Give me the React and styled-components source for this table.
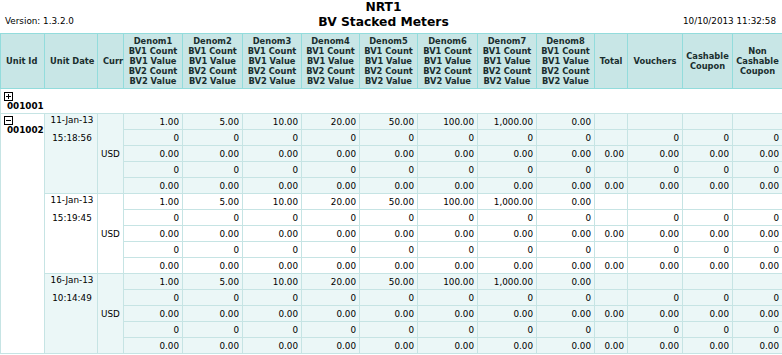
import React from 'react';
import styled, { createGlobalStyle } from 'styled-components';

const GlobalStyle = createGlobalStyle`
  body {
    margin: 0;
    background: #ffffff;
    font-family: "DejaVu Sans", Verdana, sans-serif;
    color: #000;
  }
`;

const TopBar = styled.div`
  display: grid;
  grid-template-columns: 1fr auto 1fr;
  align-items: end;
  height: 33px;
  padding: 0 6px 0 5px;
  box-sizing: border-box;
`;

const Version = styled.div`
  font-size: 8.8px;
  line-height: 10px;
  padding-bottom: 7px;
`;

const Stamp = styled(Version)`
  text-align: right;
`;

const Title = styled.div`
  font-size: 12.3px;
  font-weight: bold;
  line-height: 15px;
  text-align: center;
  padding-bottom: 3px;
  margin-right: 14px;
`;

const Table = styled.table`
  width: 782px;
  table-layout: fixed;
  border-collapse: collapse;
  font-size: 8.8px;
`;

const Th = styled.th`
  background: #c8e6e6;
  border: 1px solid #93dcdc;
  font-size: 8.3px;
  font-weight: bold;
  line-height: 10px;
  color: #1a2e2e;
  text-align: ${p => (p.$left ? 'left' : 'center')};
  padding: ${p => (p.$left ? '0 0 0 5px' : '0 1px')};
  height: 54px;
  vertical-align: middle;
`;

const Cell = styled.td`
  border: 1px solid #c6e4e4;
  background: ${p => (p.$shade ? '#ebf7f7' : '#ffffff')};
  height: 15px;
  padding: 0 3px 0 0;
  line-height: 10px;
  text-align: right;
  white-space: nowrap;
`;

const UnitCell = styled.td`
  border: 1px solid #c6e4e4;
  background: #ffffff;
  vertical-align: top;
  padding: ${p => (p.$tall ? '3px 0 0 3px' : '2px 0 0 3px')};
  height: ${p => (p.$tall ? '21px' : 'auto')};
  font-weight: bold;
  font-size: 8.8px;
  line-height: 11px;
`;

const UnitId = styled.div`
  padding-left: 3px;
`;

const DateCell = styled.td`
  border: 1px solid #c6e4e4;
  background: ${p => (p.$shade ? '#ebf7f7' : '#ffffff')};
  vertical-align: top;
  text-align: center;
  padding: 1px 0 0 2px;
  line-height: 11px;
`;

const DateLine = styled.div`
  margin-bottom: 7px;
`;

const CurrCell = styled.td`
  border: 1px solid #c6e4e4;
  background: ${p => (p.$shade ? '#ebf7f7' : '#ffffff')};
  vertical-align: middle;
  text-align: center;
  padding: 0;
`;

const Toggle = ({ open }) => (
  <svg width="9" height="9" viewBox="0 0 9 9" style={{ display: 'block' }}>
    <rect x="0.5" y="0.5" width="8" height="8" fill="#fff" stroke="#000" />
    <line x1="2" y1="4.5" x2="7" y2="4.5" stroke="#000" />
    {!open && <line x1="4.5" y1="2" x2="4.5" y2="7" stroke="#000" />}
  </svg>
);

const widths = [44, 53, 26, 59, 60, 59, 58, 58, 60, 59, 58, 33, 55, 50, 50];
const denoms = [1, 2, 3, 4, 5, 6, 7, 8];

const rowValues = [
  ['1.00', '5.00', '10.00', '20.00', '50.00', '100.00', '1,000.00', '0.00', '', '', '', ''],
  ['0', '0', '0', '0', '0', '0', '0', '0', '', '0', '0', '0'],
  ['0.00', '0.00', '0.00', '0.00', '0.00', '0.00', '0.00', '0.00', '0.00', '0.00', '0.00', '0.00'],
  ['0', '0', '0', '0', '0', '0', '0', '0', '', '0', '0', '0'],
  ['0.00', '0.00', '0.00', '0.00', '0.00', '0.00', '0.00', '0.00', '0.00', '0.00', '0.00', '0.00'],
];

const groups = [
  { date: '11-Jan-13', time: '15:18:56', shade: true },
  { date: '11-Jan-13', time: '15:19:45', shade: false },
  { date: '16-Jan-13', time: '10:14:49', shade: true },
];

export default function App() {
  return (
    <>
      <GlobalStyle />
      <TopBar>
        <Version>Version: 1.3.2.0</Version>
        <Title>
          NRT1
          <br />
          BV Stacked Meters
        </Title>
        <Stamp>10/10/2013 11:32:58</Stamp>
      </TopBar>
      <Table>
        <colgroup>
          {widths.map((w, i) => (
            <col key={i} style={{ width: w }} />
          ))}
        </colgroup>
        <thead>
          <tr>
            <Th $left>Unit Id</Th>
            <Th $left>Unit Date</Th>
            <Th $left>Curr</Th>
            {denoms.map(d => (
              <Th key={d}>
                Denom{d}
                <br />
                BV1 Count
                <br />
                BV1 Value
                <br />
                BV2 Count
                <br />
                BV2 Value
              </Th>
            ))}
            <Th>Total</Th>
            <Th>Vouchers</Th>
            <Th>Cashable Coupon</Th>
            <Th>Non Cashable Coupon</Th>
          </tr>
        </thead>
        <tbody>
          <tr>
            <UnitCell colSpan={15} $tall>
              <Toggle open={false} />
              <UnitId>001001</UnitId>
            </UnitCell>
          </tr>
          {groups.map((g, gi) =>
            rowValues.map((vals, ri) => (
              <tr key={`${gi}-${ri}`}>
                {gi === 0 && ri === 0 && (
                  <UnitCell rowSpan={15}>
                    <Toggle open />
                    <UnitId>001002</UnitId>
                  </UnitCell>
                )}
                {ri === 0 && (
                  <>
                    <DateCell rowSpan={5} $shade={g.shade}>
                      <DateLine>{g.date}</DateLine>
                      <DateLine>{g.time}</DateLine>
                    </DateCell>
                    <CurrCell rowSpan={5} $shade={g.shade}>
                      USD
                    </CurrCell>
                  </>
                )}
                {vals.map((v, ci) => (
                  <Cell key={ci} $shade={g.shade}>
                    {v}
                  </Cell>
                ))}
              </tr>
            ))
          )}
        </tbody>
      </Table>
    </>
  );
}
